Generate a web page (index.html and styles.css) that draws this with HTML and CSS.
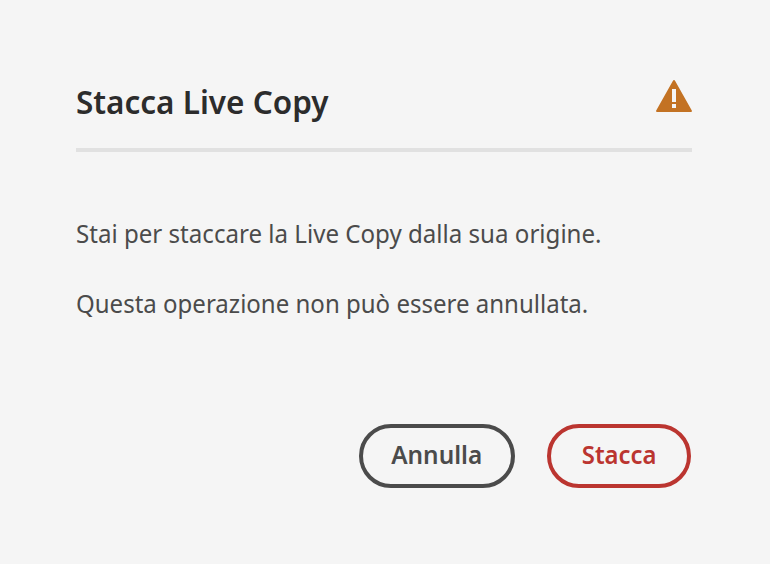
FILE: index.html
```html
<!DOCTYPE html>
<html lang="it">
<head>
<meta charset="utf-8">
<title>Stacca Live Copy</title>
<link rel="stylesheet" href="styles.css">
</head>
<body>
<main class="dialog">
  <header class="dialog-header">
    <h1 class="title"><span class="fit fit-title">Stacca Live Copy</span></h1>
    <svg class="alert" viewBox="0 0 36 32" aria-hidden="true">
      <path fill="#c37223" d="M17.1.6a1 1 0 0 1 1.8 0l16.9 29.8a1.1 1.1 0 0 1-1 1.6H1.2a1.1 1.1 0 0 1-1-1.6z"/>
      <path fill="#f5f5f5" d="M16 9h4v13h-4zM16 24h4v4h-4z"/>
    </svg>
  </header>
  <section class="content">
    <p><span class="fit fit-first">Stai per staccare la Live Copy dalla sua origine.</span></p>
    <p><span class="fit fit-second">Questa operazione non può essere annullata.</span></p>
  </section>
  <footer class="actions">
    <button class="button cancel"><span class="fit fit-cancel">Annulla</span></button>
    <button class="button detach"><span class="fit fit-detach">Stacca</span></button>
  </footer>
</main>
</body>
</html>
```
FILE: styles.css
```css
* { box-sizing: border-box; }
body { margin: 0; background: #f5f5f5; font-family: "Noto Sans", sans-serif; }
.dialog { height: 564px; padding: 76px 78px 0 76px; overflow: hidden; }
.dialog-header { display: flex; justify-content: space-between; height: 76px; border-bottom: 4px solid #e1e1e1; }
.title { margin: 0; color: #2c2c2c; font-size: 33px; line-height: 52px; font-weight: 600; white-space: nowrap; }
.alert { width: 36px; height: 32px; margin-top: 4px; }
.fit { display: inline-block; transform-origin: left center; white-space: nowrap; }
.fit-title { transform: scaleX(.954); }
.fit-first { transform: scaleX(.927); }
.fit-second { transform: scaleX(.924); }
.content { height: 272px; padding-top: 63px; color: #4b4b4b; font-size: 26px; line-height: 36px; }
.content p { margin: 0 0 34px; height: 36px; }
.actions { display: flex; justify-content: flex-end; gap: 32px; padding-right: 1px; }
.button { height: 64px; padding: 0 0 4px; border: 4px solid; border-radius: 32px; background: transparent; font: 600 25px/52px "Noto Sans", sans-serif; }
.button .fit { transform-origin: center; }
.cancel { width: 156px; color: #4b4b4b; }
.detach { width: 144px; color: #bb3530; }
.fit-cancel { transform: scaleX(.975); }
.fit-detach { transform: scaleX(.955); }
```
